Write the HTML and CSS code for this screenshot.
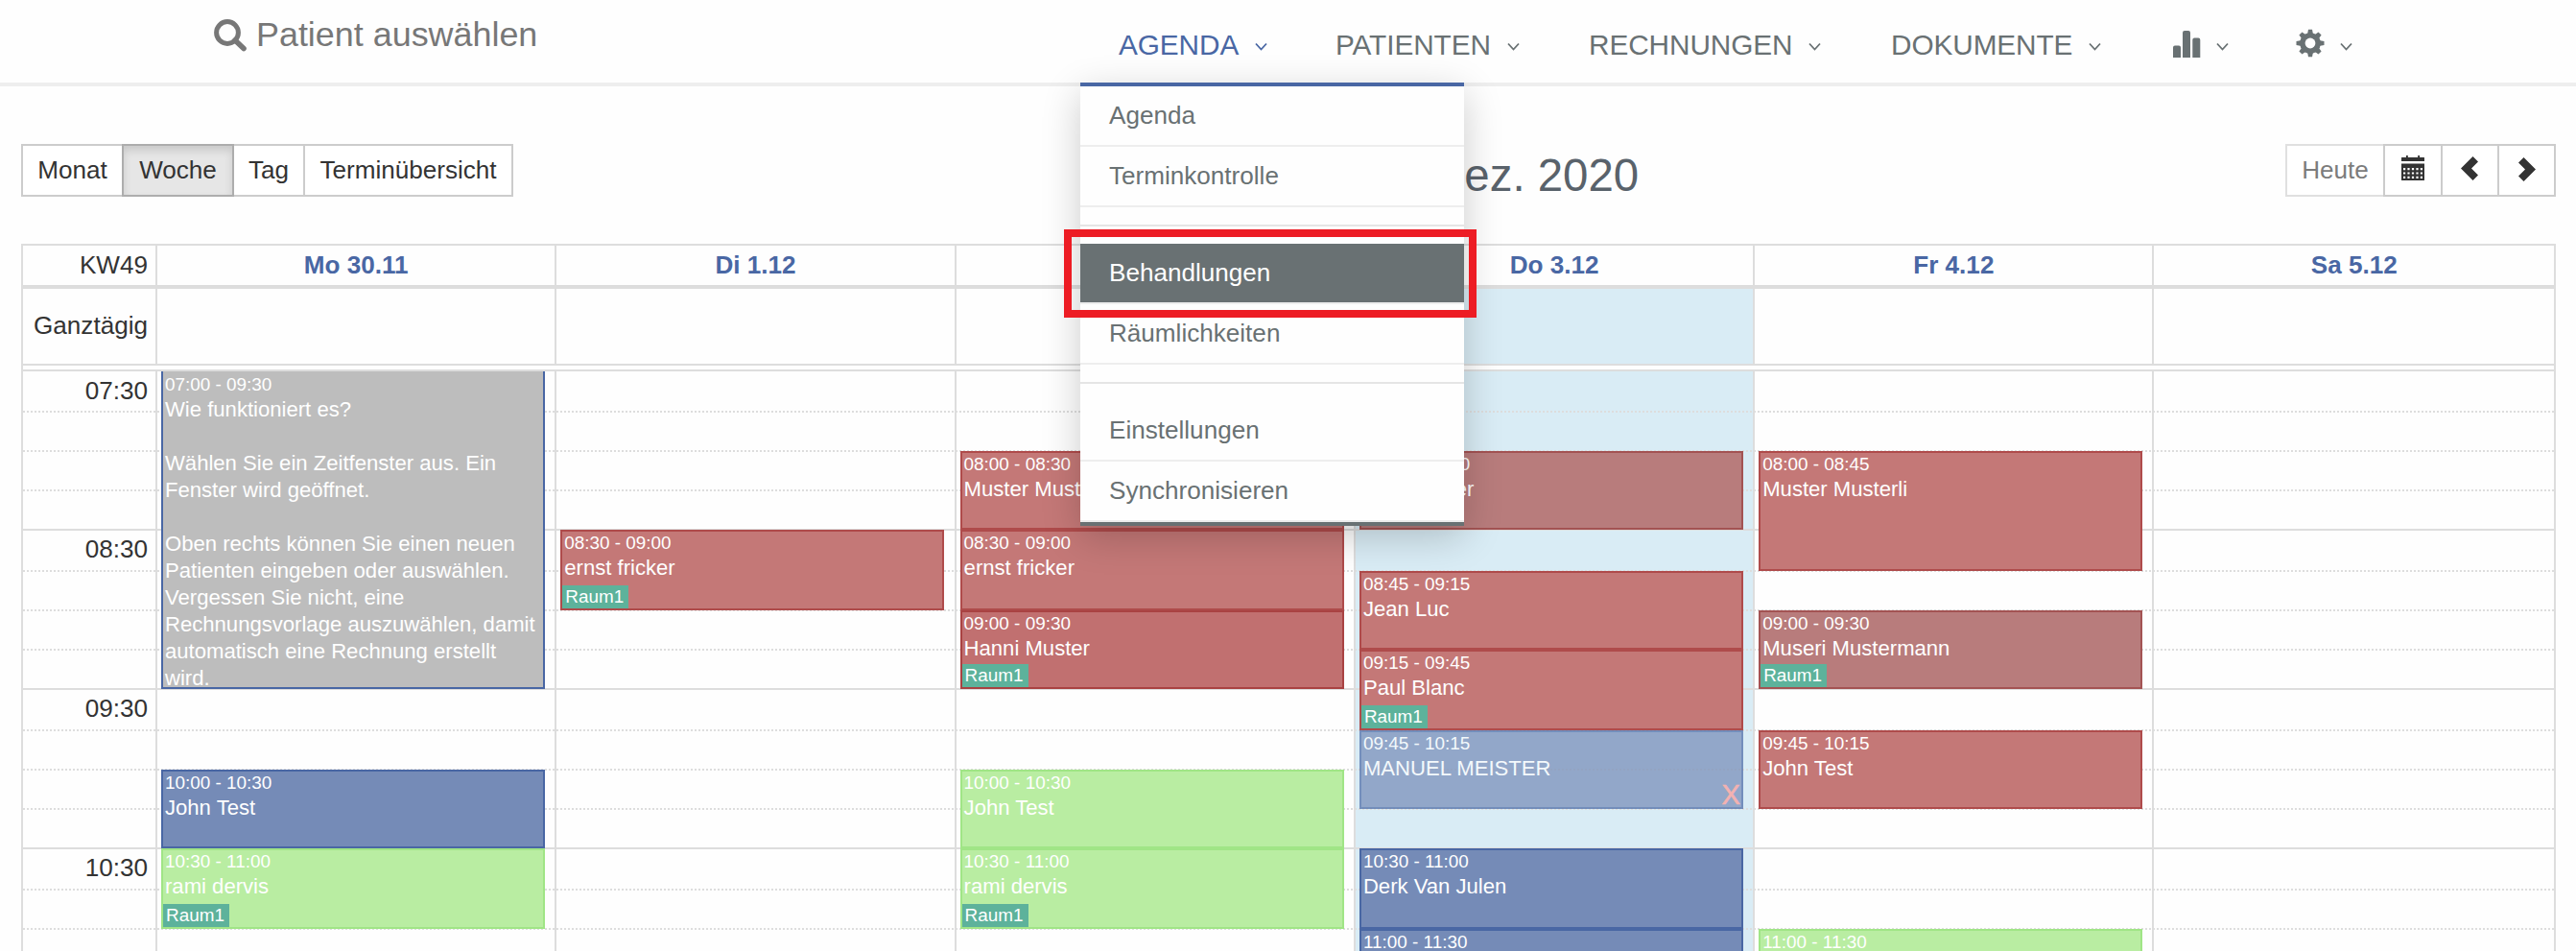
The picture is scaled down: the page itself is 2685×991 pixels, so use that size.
FILE: index.html
```html
<!DOCTYPE html>
<html lang="de">
<head>
<meta charset="utf-8">
<title>Agenda</title>
<link rel="stylesheet" href="styles.css">
</head>
<body>
<header class="topbar">
  <a class="search">
    <svg width="35" height="34" viewBox="0 0 35 34"><circle cx="14" cy="14" r="11.400" fill="none" stroke="currentColor" stroke-width="5"/><path d="M22 22L31 30.500" stroke="currentColor" stroke-width="5.600" stroke-linecap="round"/></svg>
    <span>Patient auswählen</span>
  </a>
  <nav class="nav">
    <a class="nav-item active">AGENDA<svg class="caret" viewBox="0 0 13 9"><path d="M1 1.5L6.5 7.5L12 1.5"/></svg></a>
    <a class="nav-item">PATIENTEN<svg class="caret" viewBox="0 0 13 9"><path d="M1 1.5L6.5 7.5L12 1.5"/></svg></a>
    <a class="nav-item">RECHNUNGEN<svg class="caret" viewBox="0 0 13 9"><path d="M1 1.5L6.5 7.5L12 1.5"/></svg></a>
    <a class="nav-item">DOKUMENTE<svg class="caret" viewBox="0 0 13 9"><path d="M1 1.5L6.5 7.5L12 1.5"/></svg></a>
    <a class="nav-item"><svg class="nav-icon" width="29" height="28" viewBox="0 0 29 28"><path fill="currentColor" d="M0 28V17.500q0-2 2-2h4q2 0 2 2V28zM10 28V2q0-2 2-2h4q2 0 2 2v26zM20.300 28V9.500q0-2 2-2h4q2 0 2 2V28z"/></svg><svg class="caret" viewBox="0 0 13 9"><path d="M1 1.500L6.500 7.500L12 1.500"/></svg></a>
    <a class="nav-item"><svg class="nav-icon gear" width="30" height="30" viewBox="-15 -15 30 30"><g fill="currentColor"><path d="M-3 -9L-2 -14.300H2L3 -9V9L2 14.300H-2L-3 9z"/><path transform="rotate(45)" d="M-3 -9L-2.200 -14.200H2.200L3 -9V9L2.200 14.200H-2.200L-3 9z"/><path transform="rotate(90)" d="M-3 -9L-2 -14.500H2L3 -9V9L2 14.500H-2L-3 9z"/><path transform="rotate(135)" d="M-3 -9L-2.200 -14.200H2.200L3 -9V9L2.200 14.200H-2.200L-3 9z"/><circle r="10.800"/></g><circle r="5.400" fill="#fff"/></svg><svg class="caret" viewBox="0 0 13 9"><path d="M1 1.500L6.500 7.500L12 1.500"/></svg></a>
  </nav>
  <div class="dropdown">
    <a class="drop-item">Agenda</a>
    <a class="drop-item">Terminkontrolle</a>
    <div class="divider"></div>
    <a class="drop-item hover">Behandlungen</a>
    <a class="drop-item">Räumlichkeiten</a>
    <div class="divider"></div>
    <a class="drop-item">Einstellungen</a>
    <a class="drop-item">Synchronisieren</a>
  </div>
  <div class="highlight"></div>
</header>
<main class="page">
  <div class="toolbar">
    <div class="group">
      <button class="btn monat">Monat</button><button class="btn woche pressed">Woche</button><button class="btn tag">Tag</button><button class="btn termine">Terminübersicht</button>
    </div>
    <h2 class="title">30. Nov. – 5. Dez. 2020</h2>
    <div class="group">
      <button class="btn heute">Heute</button><button class="btn icon cal"><svg width="24" height="26" viewBox="0 0 24 26"><path fill="currentColor" fill-rule="evenodd" d="M0 2.500q0-.5 .5-.5H5V0h1.800v2h10.400V0H19v2h4.500q.5 0 .5 .5V6H0zM0 8.500h24V25.500q0 .5-.5 .5H.5q-.5 0-.5-.5zM2 13v2.200h2.200V13zM6.400 13v2.200h2.200V13zM10.900 13v2.200h2.200V13zM15.400 13v2.200h2.200V13zM19.800 13v2.200H22V13zM2 17.400v2.200h2.200v-2.200zM6.400 17.400v2.200h2.200v-2.200zM10.900 17.400v2.200h2.200v-2.200zM15.400 17.400v2.200h2.200v-2.200zM19.800 17.400v2.200H22v-2.200zM2 21.800V24h2.200v-2.200zM6.400 21.800V24h2.200v-2.200zM10.900 21.800V24h2.200v-2.200zM15.400 21.800V24h2.200v-2.200zM19.800 21.800V24H22v-2.200z"/></svg></button><button class="btn icon prev"><svg width="18" height="25" viewBox="0 0 18 25"><path fill="currentColor" d="M0 12.500L12.500 0L18 5.500L11 12.500L18 19.500L12.500 25z"/></svg></button><button class="btn icon next"><svg width="18" height="25" viewBox="0 0 18 25"><path fill="currentColor" d="M18 12.500L5.500 0L0 5.500L7 12.500L0 19.500L5.500 25z"/></svg></button>
    </div>
  </div>
  <section class="calendar">
    <div class="row heads">
      <div class="axis">KW49</div><div>Mo 30.11</div><div>Di 1.12</div><div>Mi 2.12</div><div>Do 3.12</div><div>Fr 4.12</div><div>Sa 5.12</div>
    </div>
    <div class="row allday">
      <div class="axis">Ganztägig</div><div></div><div></div><div></div><div class="today"></div><div></div><div></div>
    </div>
    <div class="gap"></div>
    <div class="row times">
      <div class="axis slots">
        <div class="slot first">07:30</div><div class="slot"></div><div class="slot"></div><div class="slot"></div>
        <div class="slot hour">08:30</div><div class="slot"></div><div class="slot"></div><div class="slot"></div>
        <div class="slot hour">09:30</div><div class="slot"></div><div class="slot"></div><div class="slot"></div>
        <div class="slot hour">10:30</div><div class="slot"></div><div class="slot last"></div>
      </div>
      <div class="day">
        <article class="event gray" style="top:0px;height:331px"><time>07:00 - 09:30</time><p>Wie funktioniert es?<br><br>Wählen Sie ein Zeitfenster aus. Ein Fenster wird geöffnet.<br><br>Oben rechts können Sie einen neuen Patienten eingeben oder auswählen. Vergessen Sie nicht, eine Rechnungsvorlage auszuwählen, damit automatisch eine Rechnung erstellt wird.</p></article>
        <article class="event blue" style="top:415px;height:82px"><time>10:00 - 10:30</time><p>John Test</p></article>
        <article class="event green" style="top:497px;height:84px"><time>10:30 - 11:00</time><p>rami dervis</p><span class="room">Raum1</span></article>
      </div>
      <div class="day">
        <article class="event red" style="top:165px;height:84px"><time>08:30 - 09:00</time><p>ernst fricker</p><span class="room">Raum1</span></article>
      </div>
      <div class="day">
        <article class="event red" style="top:83px;height:82px"><time>08:00 - 08:30</time><p>Muster Musterli</p></article>
        <article class="event red" style="top:165px;height:84px"><time>08:30 - 09:00</time><p>ernst fricker</p></article>
        <article class="event crimson" style="top:249px;height:82px"><time>09:00 - 09:30</time><p>Hanni Muster</p><span class="room">Raum1</span></article>
        <article class="event green" style="top:415px;height:82px"><time>10:00 - 10:30</time><p>John Test</p></article>
        <article class="event green" style="top:497px;height:84px"><time>10:30 - 11:00</time><p>rami dervis</p><span class="room">Raum1</span></article>
      </div>
      <div class="day today">
        <article class="event dull" style="top:83px;height:82px"><time>08:00 - 08:30</time><p>ernst fricker</p></article>
        <article class="event red" style="top:208px;height:82px"><time>08:45 - 09:15</time><p>Jean Luc</p></article>
        <article class="event red" style="top:290px;height:84px"><time>09:15 - 09:45</time><p>Paul Blanc</p><span class="room">Raum1</span></article>
        <article class="event blue faded" style="top:374px;height:82px"><time>09:45 - 10:15</time><p>MANUEL MEISTER</p><span class="cancel">X</span></article>
        <article class="event blue" style="top:497px;height:84px"><time>10:30 - 11:00</time><p>Derk Van Julen</p></article>
        <article class="event blue" style="top:581px;height:84px"><time>11:00 - 11:30</time></article>
      </div>
      <div class="day">
        <article class="event red" style="top:83px;height:125px"><time>08:00 - 08:45</time><p>Muster Musterli</p></article>
        <article class="event dull" style="top:249px;height:82px"><time>09:00 - 09:30</time><p>Museri Mustermann</p><span class="room">Raum1</span></article>
        <article class="event red" style="top:374px;height:82px"><time>09:45 - 10:15</time><p>John Test</p></article>
        <article class="event green" style="top:581px;height:84px"><time>11:00 - 11:30</time></article>
      </div>
      <div class="day"></div>
    </div>
  </section>
</main>
</body>
</html>
```
FILE: styles.css
```css
* { box-sizing: border-box; }
html, body { height: 100%; }
body {
  margin: 0;
  overflow: hidden;
  background: #fefefe;
  color: #333;
  font: 26.1px/1.43 "Liberation Sans", Arial, sans-serif;
}
p, h2 { margin: 0; }

/* Top bar */
.topbar {
  position: relative;
  z-index: 5;
  display: flex;
  height: 90px;
  border-bottom: 4px solid #eee;
}
.search {
  display: flex;
  gap: 9px;
  width: 1126px;
  padding: 20px 0 0 223px;
  color: #777;
  font-size: 35.9px;
  line-height: 32px;
}
.nav {
  display: grid;
  grid-template-columns: 226px 264px 315px 294px 128px 120px;
}
.nav-item {
  display: flex;
  align-items: center;
  height: 86px;
  padding: 8px 0 0 40px;
  color: #697173;
  font-size: 29.75px;
  letter-spacing: -.08px;
}
.nav-item.active { color: #4967a4; }
.caret {
  width: 13px;
  height: 9px;
  margin: 3px 0 0 17px;
  fill: none;
  stroke: currentColor;
  stroke-width: 1.8;
}
.nav-icon { margin-top: -3px; }
.nav-icon.gear { margin-top: -5px; }
.nav-icon + .caret { margin-left: 16px; }

.dropdown {
  position: absolute;
  top: 86px;
  left: 1126px;
  width: 400px;
  border-top: 4px solid #4967a4;
  border-bottom: 4px solid #697173;
  background: #fefefe;
  box-shadow: 0 11px 38px rgba(0, 0, 0, .2);
}
.drop-item {
  display: block;
  height: 63px;
  padding-left: 30px;
  border-bottom: 2px solid #eee;
  color: #697173;
  line-height: 61px;
}
.drop-item.hover {
  background: #697173;
  background-clip: padding-box;
  color: #fff;
}
.divider {
  height: 2px;
  margin: 18px 0;
  background: #e5e5e5;
}
.highlight {
  position: absolute;
  top: 239px;
  left: 1109px;
  width: 430px;
  height: 92px;
  border: 8px solid #ed1c24;
}

/* Toolbar */
.page { padding: 60px 21px 0 22px; }
.toolbar {
  display: flex;
  align-items: flex-start;
  justify-content: space-between;
  height: 104px;
}
.group { display: flex; }
.btn {
  height: 55px;
  margin: 0;
  padding: 0;
  border: 2px solid #ccc;
  background: #fff;
  color: #333;
  font: inherit;
  line-height: 51px;
}
.btn + .btn { margin-left: -2px; }
.monat { width: 107px; }
.woche { width: 117px; }
.tag { width: 76px; }
.termine { width: 219px; }
.pressed {
  z-index: 1;
  border-color: #adadad;
  background: #e6e6e6;
  box-shadow: inset 0 5px 9px rgba(0, 0, 0, .125);
}
.heute {
  width: 104px;
  border-color: #e0e0e0;
  color: #7c7c7c;
}
.icon {
  display: flex;
  align-items: center;
  justify-content: center;
  width: 61px;
  padding-bottom: 5px;
}
.cal { width: 62px; }
.next { padding: 0 0 3px 2px; }
.title {
  padding: 3px 0 0 5px;
  color: #59626b;
  font-size: 47.4px;
  font-weight: 400;
  line-height: 60px;
}

/* Calendar */
.calendar {
  height: 737px;
  overflow: hidden;
  border: 2px solid #ddd;
  border-bottom: 0;
}
.row {
  display: grid;
  grid-template-columns: 138px repeat(5, 416.3px) 1fr;
}
.row > div + div { border-left: 2px solid #ddd; }
.axis {
  padding-right: 8px;
  text-align: right;
}
.heads {
  height: 45px;
  border-bottom: 4px solid #ddd;
  color: #4967a4;
  font-weight: 700;
  line-height: 41px;
  text-align: center;
}
.heads .axis {
  color: #333;
  font-weight: 400;
}
.allday {
  height: 80px;
  border-bottom: 2px solid #ddd;
  line-height: 76px;
}
.today { background: #d9ecf5; }
.gap {
  height: 6px;
  border-bottom: 2px solid #ddd;
}
.times {
  position: relative;
  height: 604px;
  overflow: hidden;
}
.slots {
  display: flex;
  flex-direction: column;
  padding-right: 0;
}
.slot {
  position: relative;
  height: 41px;
  padding-right: 8px;
  line-height: 40px;
}
.slot.hour {
  height: 43px;
  line-height: 43px;
}
.slot.last { height: 24px; }
.slot + .slot::before {
  content: "";
  position: absolute;
  z-index: 1;
  top: 0;
  left: 0;
  width: 2638px;
  border-top: 2px dotted #ddd;
}
.slot.hour::before { border-top-style: solid !important; }

/* Events sit on the day's time scale */
.day { position: relative; }
.event {
  position: absolute;
  z-index: 2;
  left: 4px;
  width: 400px;
  overflow: hidden;
  padding: 0 2px;
  border: 2px solid;
  color: #fff;
  font-size: 22.1px;
  line-height: 28px;
}
.event time {
  display: block;
  font-size: 18.9px;
  line-height: 24px;
}
.gray {
  padding: 2px 0 0 2px;
  border-color: #4967a4;
  border-top: 0;
  background: #bdbdbd;
}
.blue { border-color: #4967a4; background: #758bb7; }
.green { border-color: #a0e586; background: #b9eda2; }
.red { border-color: #af4b4b; background: #c47877; }
.crimson { border-color: #a94242; background: #c17070; }
.dull { border-color: #a35353; background: #b87c7c; }
.faded { opacity: .7; }
.room {
  position: absolute;
  bottom: 0;
  left: 0;
  width: 69px;
  height: 24px;
  padding-left: 3px;
  background: #5db29b;
  font-size: 18.9px;
  line-height: 23px;
}
.cancel {
  position: absolute;
  right: 1px;
  bottom: -1px;
  color: #ff9a95;
  font-size: 29px;
  -webkit-text-stroke: .6px currentColor;
}
```
